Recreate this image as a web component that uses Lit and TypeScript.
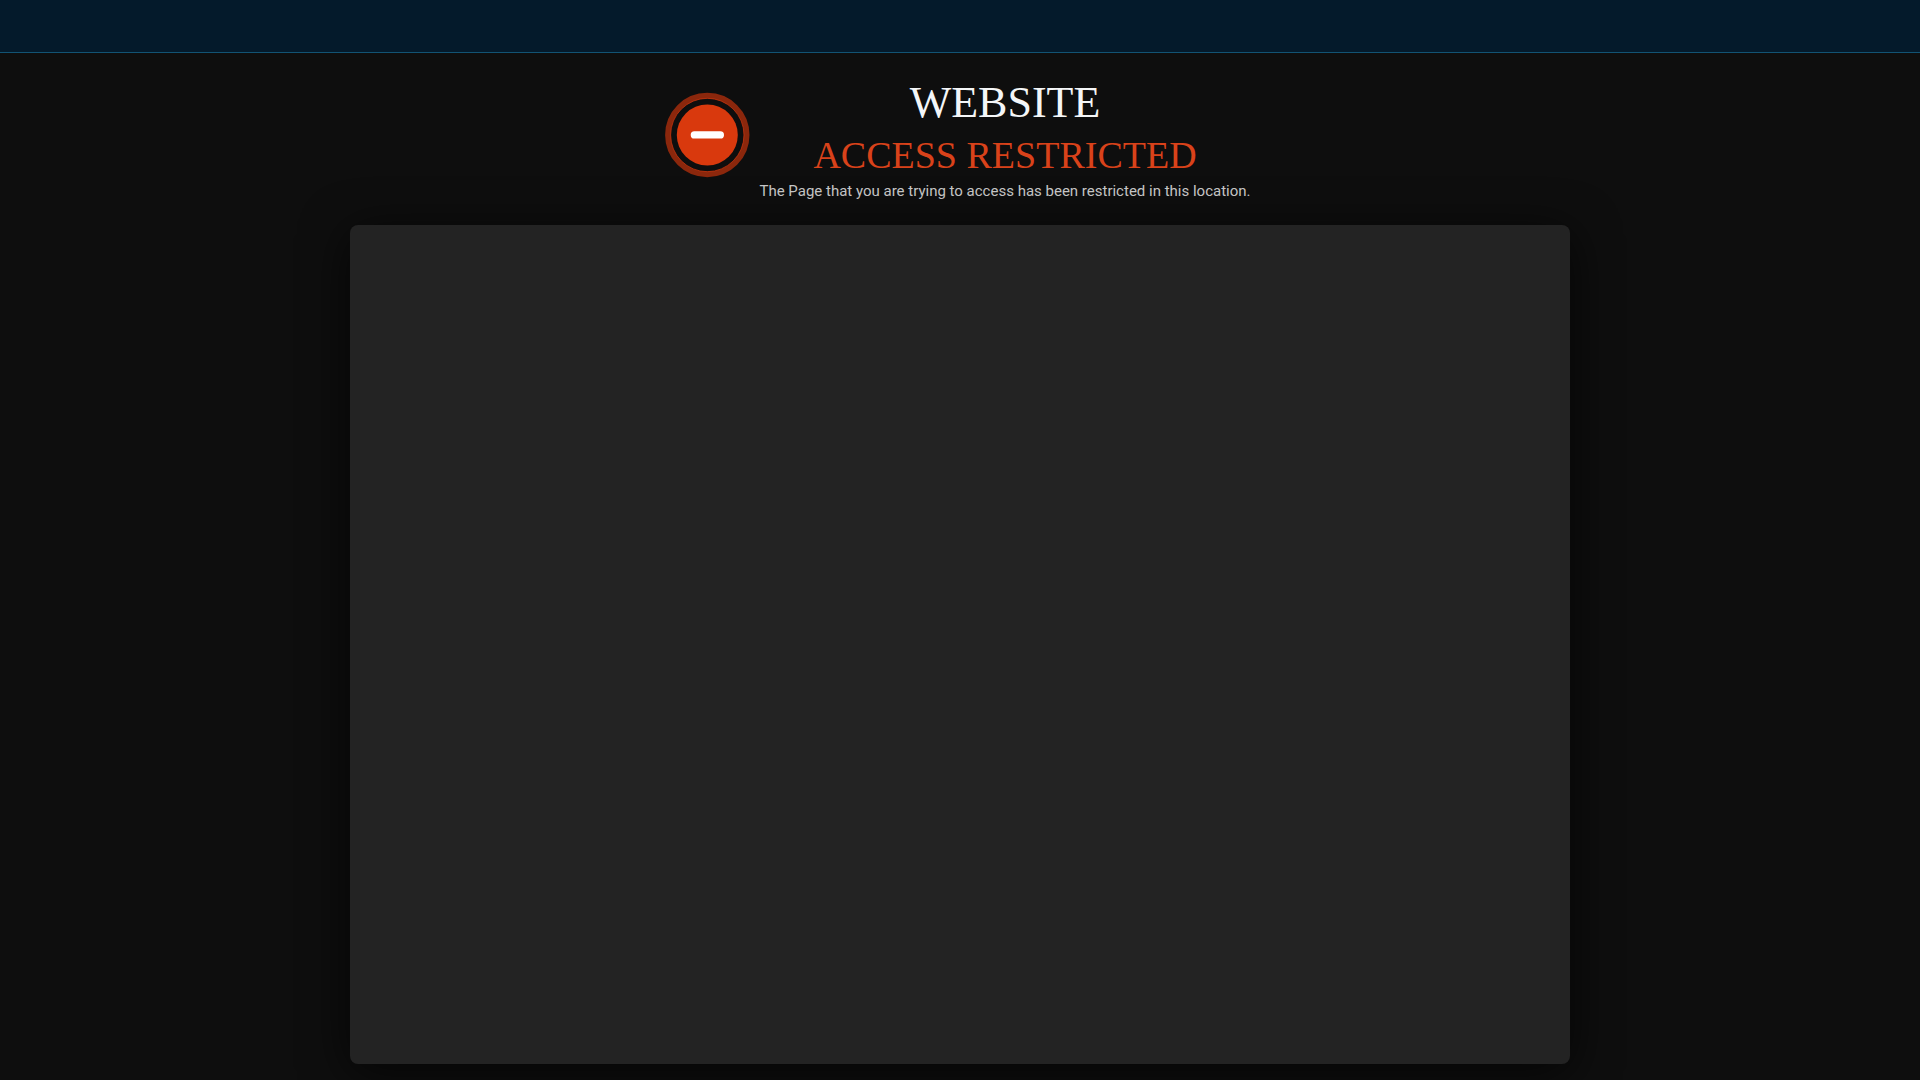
import { LitElement, html, css } from "lit";
import { customElement } from "lit/decorators.js";

@customElement("app-root")
export class AppRoot extends LitElement {
  static styles = css`
    :host {
      display: flex;
      flex-direction: column;
      box-sizing: border-box;
      min-height: 100vh;
      background: #0e0e0e;
      color: #c9c9c9;
      font-family: Roboto, "Liberation Sans", sans-serif;
    }
    .topbar {
      height: 52px;
      background: #041a2b;
      border-bottom: 1px solid #125373;
    }
    .page {
      flex: 1;
      display: flex;
      flex-direction: column;
      align-items: center;
      padding: 24px 16px 16px;
      overflow: hidden;
    }
    .notice {
      display: flex;
      align-items: center;
      gap: 8px;
      padding-right: 8px;
      margin-bottom: 24px;
    }
    .icon {
      flex: none;
      width: 90px;
      height: 90px;
      margin-bottom: 8px;
    }
    .text {
      text-align: center;
    }
    .title,
    .subtitle {
      margin: 0;
      font-family: "Liberation Serif", serif;
      font-weight: 400;
    }
    .title {
      font-size: 44px;
      line-height: 52px;
      color: #f4f6f8;
    }
    .subtitle {
      font-size: 38px;
      line-height: 52px;
      color: #d9421a;
    }
    .message {
      margin: 0;
      font-size: 15px;
      line-height: 20px;
    }
    .card {
      flex: 1;
      box-sizing: border-box;
      width: 100%;
      max-width: 1220px;
      border-radius: 8px;
      background: #232323;
      box-shadow: 0 8px 48px rgba(0, 0, 0, 0.7);
    }
  `;

  render() {
    return html`
      <header class="topbar"></header>
      <main class="page">
        <section class="notice">
          <svg class="icon" viewBox="0 0 90 90" aria-hidden="true">
            <circle cx="46.3" cy="45" r="39.4" fill="none" stroke="#8b270c" stroke-width="5.6" />
            <circle cx="46.3" cy="45" r="36.7" fill="none" stroke="#c4340d" stroke-width="0.8" />
            <circle cx="46.3" cy="45" r="30.5" fill="#d9390d" />
            <rect x="29.7" y="41.3" width="33.3" height="7.2" rx="3.6" fill="#fff" />
          </svg>
          <div class="text">
            <h1 class="title">WEBSITE</h1>
            <h2 class="subtitle">ACCESS RESTRICTED</h2>
            <p class="message">The Page that you are trying to access has been restricted in this location.</p>
          </div>
        </section>
        <section class="card"></section>
      </main>
    `;
  }
}
